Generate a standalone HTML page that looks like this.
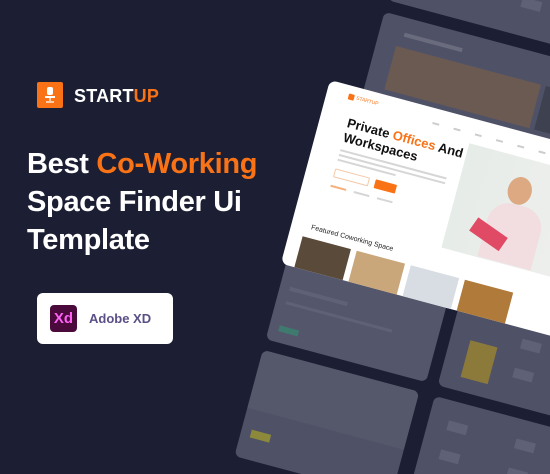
<!DOCTYPE html>
<html><head><meta charset="utf-8"><style>
*{margin:0;padding:0;box-sizing:border-box}
html,body{width:550px;height:474px;overflow:hidden}
body{background:#1c1f33;font-family:"Liberation Sans",sans-serif}
.wrap{position:relative;width:550px;height:474px;overflow:hidden}
.rot{position:absolute;left:330px;top:80px;width:0;height:0;transform-origin:0 0;transform:rotate(15deg)}
.tile{position:absolute;background:#4f5267;border-radius:6px;overflow:hidden}
.tile i{position:absolute;background:#5f6276;display:block}
.card{position:absolute;left:0;top:0;width:340px;height:190px;background:#fff;border-radius:7px;overflow:hidden}
.abs{position:absolute}
.ln{position:absolute;height:2px;background:#d6d6d6}
</style></head><body><div class="wrap">
<div class="rot">
  <div class="tile" style="left:35px;top:-260px;width:340px;height:168px">
    <i style="left:20px;top:120px;width:30px;height:30px;background:#8c7a3a"></i>
    <i style="left:70px;top:125px;width:20px;height:10px"></i>
    <i style="left:130px;top:130px;width:20px;height:10px"></i>
  </div>
  <div class="tile" style="left:35px;top:-80px;width:340px;height:200px">
    <i style="left:25px;top:15px;width:60px;height:4px;background:#6a6c7e"></i>
    <i style="left:20px;top:30px;width:150px;height:45px;background:#6b5a52"></i>
    <i style="left:175px;top:30px;width:80px;height:45px;background:#3e4150"></i>
    <i style="left:270px;top:30px;width:30px;height:10px;background:#8a6a52"></i>
  </div>
  <div class="tile" style="left:5px;top:100px;width:166px;height:167px;background:#54576b">
    <i style="left:10px;top:110px;width:60px;height:4px"></i>
    <i style="left:10px;top:125px;width:110px;height:3px"></i>
    <i style="left:10px;top:150px;width:20px;height:6px;background:#3f7a6e"></i>
  </div>
  <div class="tile" style="left:183px;top:100px;width:200px;height:167px">
    <i style="left:20px;top:115px;width:28px;height:38px;background:#8c7a3a"></i>
    <i style="left:70px;top:100px;width:20px;height:10px"></i>
    <i style="left:70px;top:130px;width:20px;height:10px"></i>
    <i style="left:130px;top:110px;width:20px;height:10px"></i>
    <i style="left:130px;top:140px;width:20px;height:10px"></i>
  </div>
  <div class="tile" style="left:5px;top:278px;width:162px;height:110px">
    <i style="left:0;top:0;width:162px;height:60px;background:#55586a"></i>
    <i style="left:10px;top:80px;width:20px;height:8px;background:#8c8a3a"></i>
  </div>
  <div class="tile" style="left:183px;top:278px;width:200px;height:130px">
    <i style="left:20px;top:20px;width:20px;height:10px"></i>
    <i style="left:20px;top:50px;width:20px;height:10px"></i>
    <i style="left:90px;top:20px;width:20px;height:10px"></i>
    <i style="left:90px;top:50px;width:20px;height:10px"></i>
  </div>
  <div class="card">
    <div class="abs" style="left:22px;top:8px;width:6px;height:6px;background:#f97316;border-radius:1px"></div>
    <div class="abs" style="left:30px;top:8px;font-size:5px;color:#f97316">STARTUP</div>
    <div class="abs" style="left:110px;top:14px;width:120px;height:2px;background:repeating-linear-gradient(90deg,#ccc 0 7px,transparent 7px 22px)"></div>
    <div class="abs" style="left:246px;top:12px;width:22px;height:9px;background:#f97316;border-radius:1px"></div>
    <div class="abs" style="left:28px;top:29px;font-size:13px;font-weight:bold;line-height:15px;color:#111">Private <span style="color:#f97316">Offices</span> And<br>Workspaces</div>
    <div class="ln" style="left:28px;top:64px;width:110px;height:1.5px"></div>
    <div class="ln" style="left:28px;top:69px;width:110px;height:1.5px"></div>
    <div class="ln" style="left:28px;top:74px;width:60px;height:1.5px"></div>
    <div class="abs" style="left:28px;top:84px;width:36px;height:9px;border:1px solid #f3c9a8;border-radius:1px"></div>
    <div class="abs" style="left:70px;top:84px;width:22px;height:9px;background:#f97316;border-radius:1px"></div>
    <div class="ln" style="left:28px;top:101px;width:16px;background:#f7b07a;height:1.5px"></div>
    <div class="ln" style="left:52px;top:101px;width:16px;height:1.5px"></div>
    <div class="ln" style="left:76px;top:101px;width:16px;height:1.5px"></div>
    <div class="abs" style="left:151px;top:25px;width:190px;height:108px;background:linear-gradient(90deg,#e6ece8,#f3f1f0)"></div>
    <div class="abs" style="left:200px;top:44px;width:24px;height:28px;border-radius:50%;background:#dca982"></div>
    <div class="abs" style="left:188px;top:72px;width:55px;height:60px;border-radius:22px 22px 0 0;background:#f2dde0"></div>
    <div class="abs" style="left:175px;top:100px;width:36px;height:16px;background:#e04a64;transform:rotate(20deg)"></div>
    <div class="abs" style="left:20px;top:144px;font-size:7px;color:#222">Featured Coworking Space</div>
    <div class="abs" style="left:14px;top:158px;width:50px;height:34px;background:#5a4a3a"></div>
    <div class="abs" style="left:70px;top:158px;width:50px;height:34px;background:#c9a77a"></div>
    <div class="abs" style="left:126px;top:158px;width:50px;height:34px;background:#d7dde3"></div>
    <div class="abs" style="left:182px;top:158px;width:50px;height:34px;background:#b07a3a"></div>
  </div>
</div>

<div class="abs" style="left:37px;top:82px;width:26px;height:26px;background:#f97316;border-radius:2px"></div>
<svg class="abs" style="left:43px;top:86px" width="14" height="18" viewBox="0 0 14 18"><rect x="4" y="1" width="6" height="8" rx="2" fill="#fff"/><rect x="2" y="10" width="10" height="2" fill="#fff"/><path d="M7 12v3M3 16h8" stroke="#fff" stroke-width="1.2"/></svg>
<div class="abs" style="left:74px;top:86px;font-size:18px;font-weight:bold;color:#fff;letter-spacing:0.2px">START<span style="color:#f97316">UP</span></div>

<div class="abs" style="left:27px;top:145px;font-size:29px;font-weight:bold;color:#fff;line-height:38px;letter-spacing:-0.3px">Best <span style="color:#f97316">Co-Working</span><br>Space Finder Ui<br>Template</div>

<div class="abs" style="left:37px;top:293px;width:136px;height:51px;background:#fff;border-radius:6px"></div>
<div class="abs" style="left:50px;top:305px;width:27px;height:27px;background:#4a0a3c;border-radius:4px;color:#ff61f6;font-size:15px;font-weight:bold;text-align:center;line-height:27px">Xd</div>
<div class="abs" style="left:89px;top:311px;font-size:13px;font-weight:bold;color:#5a4f86">Adobe XD</div>
</div></body></html>
